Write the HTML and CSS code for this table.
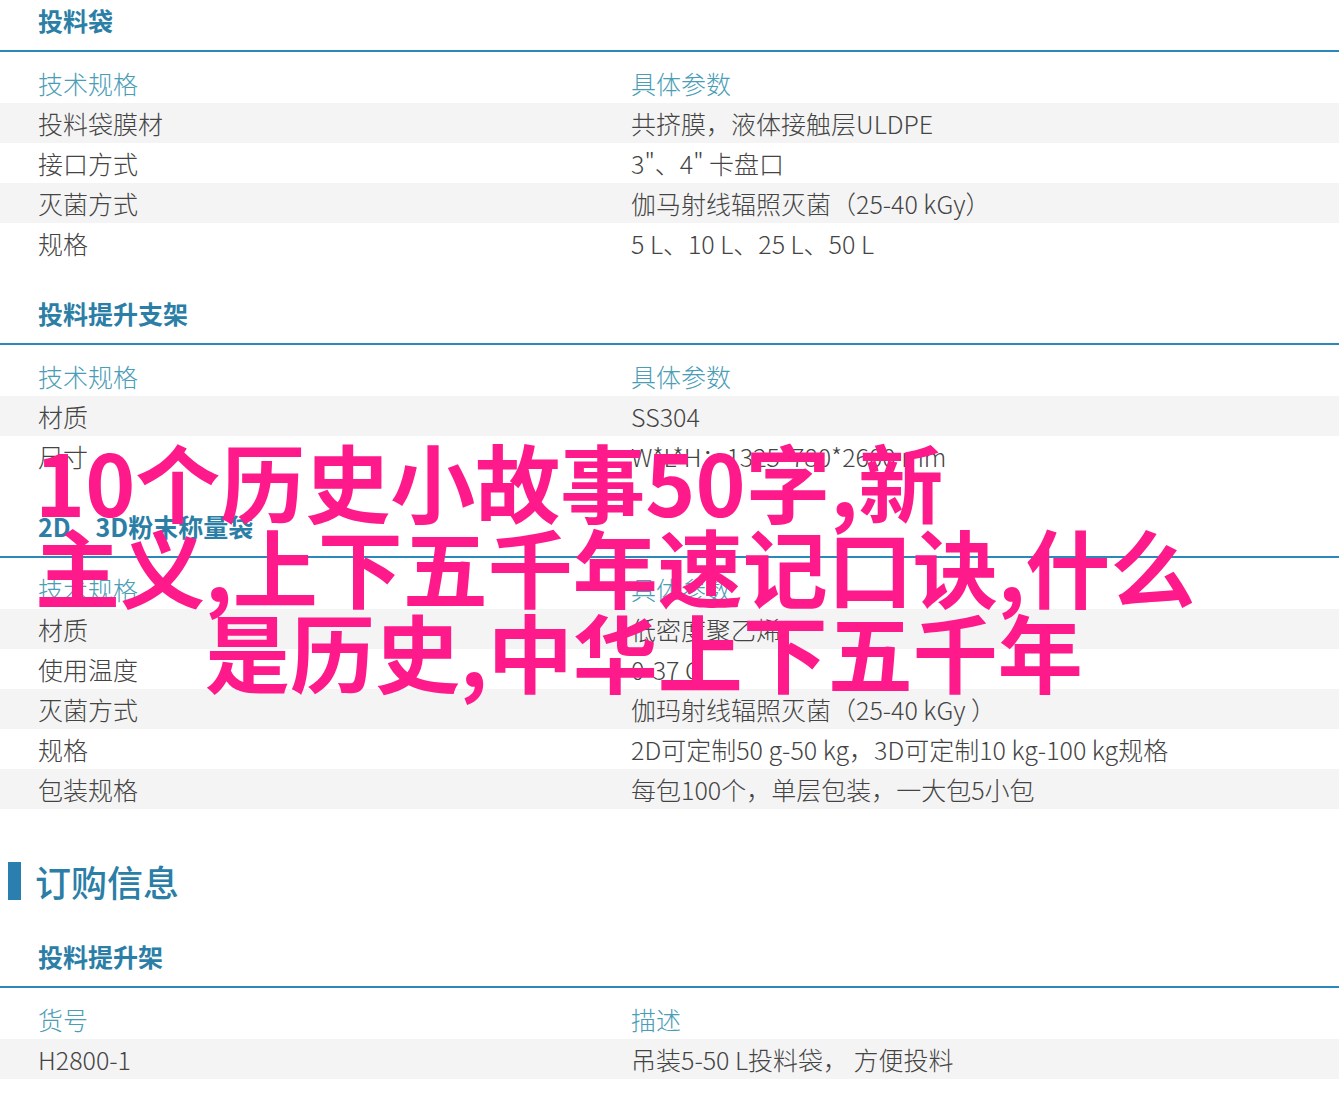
FILE: index.html
```html
<!DOCTYPE html>
<html lang="zh-CN">
<head>
    <meta charset="UTF-8">
    <meta name="viewport" content="width=device-width, initial-scale=1.0">
    <title>技术规格</title>
    <link rel="stylesheet" href="styles.css">
</head>
<body>

<div class="page">
    <!-- 投料袋 -->
    <h3 class="spec-title first">投料袋</h3>
    <div class="spec-table">
        <div class="row head"><span>技术规格</span><span>具体参数</span></div>
        <div class="row"><span>投料袋膜材</span><span>共挤膜，液体接触层ULDPE</span></div>
        <div class="row"><span>接口方式</span><span>3"、4" 卡盘口</span></div>
        <div class="row"><span>灭菌方式</span><span>伽马射线辐照灭菌（25-40 kGy）</span></div>
        <div class="row"><span>规格</span><span>5 L、10 L、25 L、50 L</span></div>
    </div>

    <!-- 投料提升支架 -->
    <h3 class="spec-title">投料提升支架</h3>
    <div class="spec-table">
        <div class="row head"><span>技术规格</span><span>具体参数</span></div>
        <div class="row"><span>材质</span><span>SS304</span></div>
        <div class="row"><span>尺寸</span><span>W*L*H：1325*780*2600 mm</span></div>
    </div>

    <!-- 2D、3D粉末称量袋 -->
    <h3 class="spec-title">2D、3D粉末称量袋</h3>
    <div class="spec-table">
        <div class="row head"><span>技术规格</span><span>具体参数</span></div>
        <div class="row"><span>材质</span><span>低密度聚乙烯</span></div>
        <div class="row"><span>使用温度</span><span>0-37 C</span></div>
        <div class="row"><span>灭菌方式</span><span>伽玛射线辐照灭菌（25-40 kGy ）</span></div>
        <div class="row"><span>规格</span><span>2D可定制50 g-50 kg，3D可定制10 kg-100 kg规格</span></div>
        <div class="row"><span>包装规格</span><span>每包100个，单层包装，一大包5小包</span></div>
    </div>

    <!-- 订购信息 -->
    <h2 class="block-title">订购信息</h2>

    <h3 class="spec-title order">投料提升架</h3>
    <div class="spec-table">
        <div class="row head"><span>货号</span><span>描述</span></div>
        <div class="row"><span>H2800-1</span><span>吊装5-50 L投料袋， 方便投料</span></div>
    </div>

    <div class="overlay">
        <span class="line">10个历史小故事50字,新</span>
        <span class="line">主义,上下五千年速记口诀,什么</span>
        <span class="line last">是历史,中华上下五千年</span>
    </div>
</div>

</body>
</html>
```

FILE: styles.css
```css
body {
    margin: 0;
    background: #fff;
    font-family: "Noto Sans CJK SC", "Noto Sans", sans-serif;
    color: #444;
}

.page {
    position: relative;
    width: 1339px;
}

.spec-title {
    margin: 35px 0 0 0;
    padding: 0 0 15px 38px;
    font-size: 25px;
    line-height: 30px;
    font-weight: bold;
    color: #2b7ea6;
    border-bottom: 2px solid #2b88bb;
}

.spec-title.first {
    margin-top: 5px;
}

.spec-title.order {
    margin-top: 40px;
}

.spec-table {
    margin-top: 11px;
}

.row {
    display: grid;
    grid-template-columns: 631px 1fr;
    height: 40px;
    line-height: 40px;
    font-size: 25px;
    font-weight: 300;
    color: #444;
}

.row span:first-child {
    padding-left: 38px;
}

.row:nth-child(even) {
    background-color: #f4f4f4;
}

.row.head {
    color: #4a9db6;
}

.block-title {
    display: flex;
    align-items: center;
    gap: 14px;
    margin: 52px 0 0 0;
    height: 40px;
    font-size: 36px;
    line-height: 40px;
    font-weight: 500;
    color: #2b7ea6;
}

.block-title::before {
    content: "";
    width: 13px;
    height: 38px;
    margin-left: 8px;
    background-color: #2a7fb0;
}

/* pink headline laid over the tables */
.overlay {
    position: absolute;
    left: 35px;
    top: 432px;
    display: flex;
    flex-direction: column;
    font-size: 85px;
    line-height: 85px;
    font-weight: bold;
    color: #ff1a8c;
    white-space: nowrap;
}

.overlay .last {
    padding-left: 170px;
}
```
